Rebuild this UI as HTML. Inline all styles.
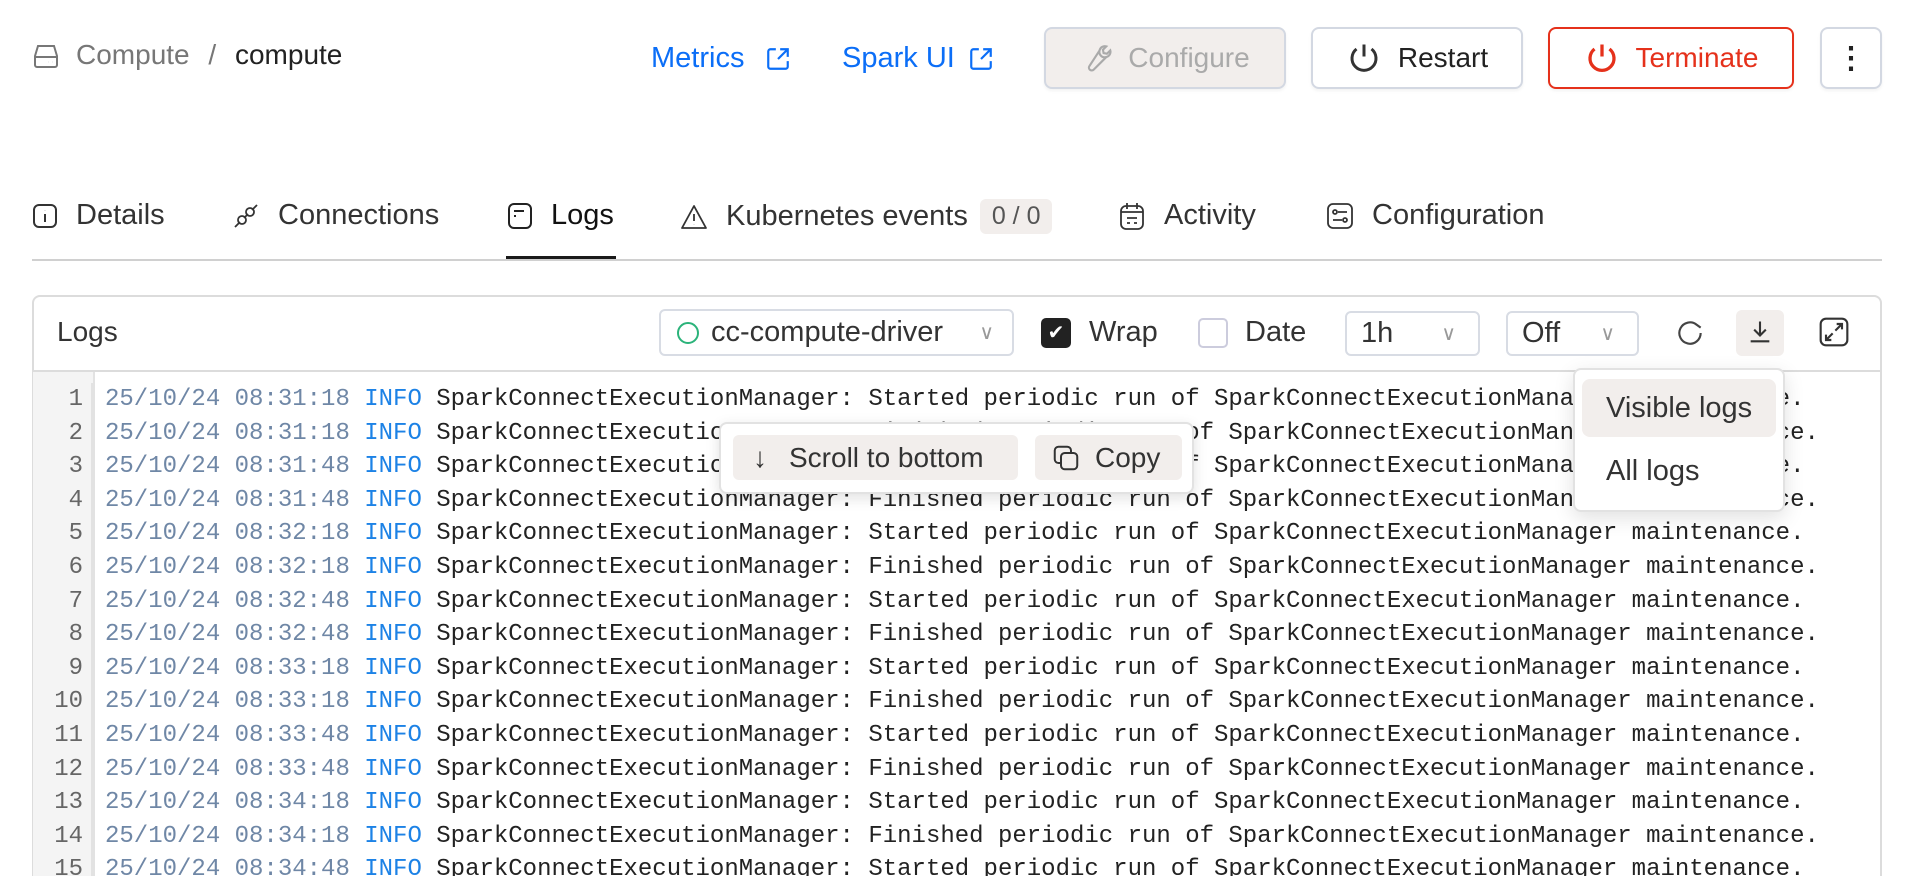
<!DOCTYPE html>
<html><head><meta charset="utf-8">
<style>
*{box-sizing:border-box;margin:0;padding:0}
html,body{width:1916px;height:876px;overflow:hidden}
body{background:#fff;font-family:"Liberation Sans",sans-serif;color:#222;position:relative}
.a{position:absolute}
.btn{position:absolute;border:2px solid #d3d8e2;border-radius:8px;display:flex;align-items:center;justify-content:center;font-size:28px;gap:16px;box-shadow:0 2px 3px rgba(0,0,0,.05)}
.tab{position:absolute;top:199px;display:flex;align-items:center;gap:18px;font-size:29px;color:#333}
.sel{position:absolute;border:2px solid #d8dce4;border-radius:6px;display:flex;align-items:center;font-size:29px;color:#333}
.code{position:absolute;left:33px;top:372px;width:1848px;height:504px;overflow:hidden;font-family:"Liberation Mono",monospace;font-size:24px;padding-top:11px;background:linear-gradient(to right,#f4f4f4 0,#f4f4f4 60px,#e2e2e2 60px,#e2e2e2 62px,transparent 62px)}
.ln{height:33.6px;line-height:33.6px;white-space:pre;display:flex}
.n{width:60px;text-align:right;padding-right:8px;color:#666;border-right:2px solid #e2e2e2;margin-right:12px}
.t{color:#6f87a6}.i{color:#1c82e6}
</style></head><body>
<svg class="a" style="left:32px;top:42px" width="28" height="28" viewBox="0 0 28 28" fill="none" stroke="#777" stroke-width="2"><path d="M6 4h16l3 10v9a2 2 0 0 1-2 2H5a2 2 0 0 1-2-2v-9z"/><path d="M3 15h22"/><path d="M16 20h.1M20 20h.1"/></svg>
<div class="a" style="left:76px;top:39px;font-size:28px;color:#777">Compute <span style="margin:0 11px">/</span> <span style="color:#222">compute</span></div>
<div class="a" style="left:651px;top:42px;font-size:29px;color:#0b6ef7">Metrics</div>
<svg class="a" style="left:765px;top:46px" width="26" height="26" viewBox="0 0 24 24" fill="none" stroke="#0b6ef7" stroke-width="2"><path d="M10 3H5a2 2 0 0 0-2 2v14a2 2 0 0 0 2 2h14a2 2 0 0 0 2-2v-5"/><path d="M14 3h7v7M21 3l-9 9"/></svg>
<div class="a" style="left:842px;top:42px;font-size:29px;color:#0b6ef7">Spark UI</div>
<svg class="a" style="left:968px;top:46px" width="26" height="26" viewBox="0 0 24 24" fill="none" stroke="#0b6ef7" stroke-width="2"><path d="M10 3H5a2 2 0 0 0-2 2v14a2 2 0 0 0 2 2h14a2 2 0 0 0 2-2v-5"/><path d="M14 3h7v7M21 3l-9 9"/></svg>
<div class="btn" style="left:1044px;top:27px;width:242px;height:62px;background:#f2eeec;color:#aaa"><svg width="32" height="32" viewBox="0 0 24 24" fill="none" stroke="#aaa" stroke-width="1.6"><path d="M14.7 6.3a4 4 0 0 0 5 5l-9.4 9.4a2.1 2.1 0 0 1-3-3z M14.7 6.3a4 4 0 0 1 5-3l-2.5 2.5.5 2.5 2.5.5 2.5-2.5a4 4 0 0 1-3 5"/></svg>Configure</div>
<div class="btn" style="left:1311px;top:27px;width:212px;height:62px;color:#222"><svg width="36" height="36" viewBox="0 0 24 24" fill="none" stroke="#333" stroke-width="2"><path d="M12 3v8"/><path d="M7 6a8 8 0 1 0 10 0"/></svg>Restart</div>
<div class="btn" style="left:1548px;top:27px;width:246px;height:62px;color:#e5311b;border-color:#e5311b"><svg width="36" height="36" viewBox="0 0 24 24" fill="none" stroke="#e5311b" stroke-width="2.2"><path d="M12 3v8"/><path d="M7 6a8 8 0 1 0 10 0"/></svg>Terminate</div>
<div class="btn" style="left:1820px;top:27px;width:62px;height:62px;font-size:30px;font-weight:bold">⋮</div>
<div class="tab" style="left:32px"><svg width="26" height="26" viewBox="0 0 26 26" fill="none" stroke="#333" stroke-width="2"><rect x="2" y="2" width="22" height="22" rx="5"/><path d="M13 11v8M13 7v.1"/></svg>Details</div>
<div class="tab" style="left:232px"><svg width="28" height="28" viewBox="0 0 28 28" fill="none" stroke="#333" stroke-width="1.8"><path d="M3 25l5-5M25 3l-5 5"/><circle cx="10" cy="18" r="4"/><circle cx="18" cy="10" r="4"/><path d="M12 16l4-4"/></svg>Connections</div>
<div class="tab" style="left:507px;color:#111"><svg width="26" height="28" viewBox="0 0 26 28" fill="none" stroke="#222" stroke-width="2"><rect x="2" y="2" width="22" height="24" rx="5"/><path d="M7 9h10M7 14h2"/></svg>Logs</div>
<div class="a" style="left:506px;top:256px;width:110px;height:4px;background:#1a1a1a"></div>
<div class="tab" style="left:680px"><svg width="28" height="28" viewBox="0 0 28 28" fill="none" stroke="#333" stroke-width="1.8"><path d="M14 3L2 25h24z" stroke-linejoin="round"/><path d="M14 11v7M14 21v.1"/></svg>Kubernetes events<span style="background:#f2eeec;border-radius:6px;padding:3px 12px;font-size:25px;color:#555;margin-left:-6px">0 / 0</span></div>
<div class="tab" style="left:1118px"><svg width="28" height="30" viewBox="0 0 28 30" fill="none" stroke="#333" stroke-width="1.8"><rect x="3" y="5" width="22" height="23" rx="5"/><path d="M9 2v6M19 2v6M3 11h22M9 17h10M9 22h3M16 22h3"/></svg>Activity</div>
<div class="tab" style="left:1326px"><svg width="28" height="28" viewBox="0 0 28 28" fill="none" stroke="#333" stroke-width="1.8"><rect x="2" y="2" width="24" height="24" rx="5"/><path d="M12 10h9M7 18h9"/><circle cx="9" cy="10" r="2"/><circle cx="19" cy="18" r="2"/></svg>Configuration</div>
<div class="a" style="left:32px;top:259px;width:1850px;height:2px;background:#d0d0d0"></div>
<div class="a" style="left:32px;top:295px;width:1850px;height:600px;border:2px solid #dcdcdc;border-radius:8px"></div>
<div class="a" style="left:33px;top:370px;width:1848px;height:2px;background:#dcdcdc"></div>
<div class="a" style="left:57px;top:316px;font-size:28px;color:#333">Logs</div>
<div class="sel" style="left:659px;top:309px;width:355px;height:47px;padding-left:16px"><span style="width:22px;height:22px;border:2.5px solid #2bb37a;border-radius:50%;margin-right:12px"></span>cc-compute-driver<span style="margin-left:auto;margin-right:18px;color:#999;font-size:20px">∨</span></div>
<div class="a" style="left:1041px;top:318px;width:30px;height:30px;background:#222;border-radius:5px;color:#fff;font-size:20px;text-align:center;line-height:30px">✔</div>
<div class="a" style="left:1089px;top:316px;font-size:29px;color:#333">Wrap</div>
<div class="a" style="left:1198px;top:318px;width:30px;height:30px;border:2px solid #ccd;border-radius:5px"></div>
<div class="a" style="left:1245px;top:316px;font-size:29px;color:#333">Date</div>
<div class="sel" style="left:1345px;top:311px;width:135px;height:45px;padding-left:14px">1h<span style="margin-left:auto;margin-right:22px;color:#999;font-size:20px">∨</span></div>
<div class="sel" style="left:1506px;top:311px;width:133px;height:45px;padding-left:14px">Off<span style="margin-left:auto;margin-right:22px;color:#999;font-size:20px">∨</span></div>
<svg class="a" style="left:1674px;top:317px" width="32" height="32" viewBox="0 0 24 24" fill="none" stroke="#444" stroke-width="1.6"><path d="M20 12a8 8 0 1 1-3-6.2L20 8"/></svg>
<div class="a" style="left:1736px;top:310px;width:48px;height:46px;background:#f2eeec;border-radius:6px"></div>
<svg class="a" style="left:1746px;top:318px" width="28" height="28" viewBox="0 0 24 24" fill="none" stroke="#333" stroke-width="1.8"><path d="M12 3v11M7 10l5 5 5-5M4 20h16"/></svg>
<svg class="a" style="left:1818px;top:316px" width="32" height="32" viewBox="0 0 24 24" fill="none" stroke="#333" stroke-width="1.6"><rect x="2" y="2" width="20" height="20" rx="4"/><path d="M14 6h4v4M18 6l-5 5M10 18H6v-4M6 18l5-5"/></svg>
<div class="code">
<div class="ln"><span class="n">1</span><span class="t">25/10/24 08:31:18 </span><span class="i">INFO </span>SparkConnectExecutionManager: Started periodic run of SparkConnectExecutionManager maintenance.</div>
<div class="ln"><span class="n">2</span><span class="t">25/10/24 08:31:18 </span><span class="i">INFO </span>SparkConnectExecutionManager: Finished periodic run of SparkConnectExecutionManager maintenance.</div>
<div class="ln"><span class="n">3</span><span class="t">25/10/24 08:31:48 </span><span class="i">INFO </span>SparkConnectExecutionManager: Started periodic run of SparkConnectExecutionManager maintenance.</div>
<div class="ln"><span class="n">4</span><span class="t">25/10/24 08:31:48 </span><span class="i">INFO </span>SparkConnectExecutionManager: Finished periodic run of SparkConnectExecutionManager maintenance.</div>
<div class="ln"><span class="n">5</span><span class="t">25/10/24 08:32:18 </span><span class="i">INFO </span>SparkConnectExecutionManager: Started periodic run of SparkConnectExecutionManager maintenance.</div>
<div class="ln"><span class="n">6</span><span class="t">25/10/24 08:32:18 </span><span class="i">INFO </span>SparkConnectExecutionManager: Finished periodic run of SparkConnectExecutionManager maintenance.</div>
<div class="ln"><span class="n">7</span><span class="t">25/10/24 08:32:48 </span><span class="i">INFO </span>SparkConnectExecutionManager: Started periodic run of SparkConnectExecutionManager maintenance.</div>
<div class="ln"><span class="n">8</span><span class="t">25/10/24 08:32:48 </span><span class="i">INFO </span>SparkConnectExecutionManager: Finished periodic run of SparkConnectExecutionManager maintenance.</div>
<div class="ln"><span class="n">9</span><span class="t">25/10/24 08:33:18 </span><span class="i">INFO </span>SparkConnectExecutionManager: Started periodic run of SparkConnectExecutionManager maintenance.</div>
<div class="ln"><span class="n">10</span><span class="t">25/10/24 08:33:18 </span><span class="i">INFO </span>SparkConnectExecutionManager: Finished periodic run of SparkConnectExecutionManager maintenance.</div>
<div class="ln"><span class="n">11</span><span class="t">25/10/24 08:33:48 </span><span class="i">INFO </span>SparkConnectExecutionManager: Started periodic run of SparkConnectExecutionManager maintenance.</div>
<div class="ln"><span class="n">12</span><span class="t">25/10/24 08:33:48 </span><span class="i">INFO </span>SparkConnectExecutionManager: Finished periodic run of SparkConnectExecutionManager maintenance.</div>
<div class="ln"><span class="n">13</span><span class="t">25/10/24 08:34:18 </span><span class="i">INFO </span>SparkConnectExecutionManager: Started periodic run of SparkConnectExecutionManager maintenance.</div>
<div class="ln"><span class="n">14</span><span class="t">25/10/24 08:34:18 </span><span class="i">INFO </span>SparkConnectExecutionManager: Finished periodic run of SparkConnectExecutionManager maintenance.</div>
<div class="ln"><span class="n">15</span><span class="t">25/10/24 08:34:48 </span><span class="i">INFO </span>SparkConnectExecutionManager: Started periodic run of SparkConnectExecutionManager maintenance.</div>
</div>
<div class="a" style="left:719px;top:422px;width:475px;height:72px;background:#fff;border:2px solid #e2e2e2;border-radius:8px;box-shadow:0 4px 14px rgba(0,0,0,.12)"></div>
<div class="a" style="left:733px;top:435px;width:285px;height:45px;background:#f2eeec;border-radius:6px;display:flex;align-items:center;font-size:28px;color:#333;padding-left:20px;gap:22px"><span style="font-size:28px">↓</span>Scroll to bottom</div>
<div class="a" style="left:1035px;top:435px;width:147px;height:45px;background:#f2eeec;border-radius:6px;display:flex;align-items:center;font-size:28px;color:#333;padding-left:16px;gap:14px"><svg width="30" height="30" viewBox="0 0 24 24" fill="none" stroke="#333" stroke-width="1.6"><rect x="8" y="8" width="13" height="13" rx="3"/><path d="M16 8V6a3 3 0 0 0-3-3H6a3 3 0 0 0-3 3v7a3 3 0 0 0 3 3h2"/></svg>Copy</div>
<div class="a" style="left:1573px;top:368px;width:212px;height:144px;background:#fff;border:2px solid #e2e2e2;border-radius:8px;box-shadow:0 6px 20px rgba(0,0,0,.12)"></div>
<div class="a" style="left:1582px;top:379px;width:194px;height:58px;background:#f2eeec;border-radius:8px;font-size:29px;color:#333;line-height:58px;padding-left:24px">Visible logs</div>
<div class="a" style="left:1606px;top:455px;font-size:29px;color:#333">All logs</div>
</body></html>
